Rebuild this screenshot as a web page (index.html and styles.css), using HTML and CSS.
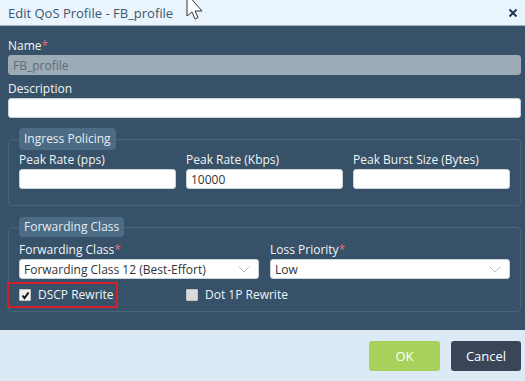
FILE: index.html
```html
<!DOCTYPE html>
<html lang="en">
<head>
  <meta charset="UTF-8">
  <meta name="viewport" content="width=device-width, initial-scale=1.0">
  <title>Edit QoS Profile</title>
  <link rel="stylesheet" href="styles.css">
</head>
<body>
  <div class="dialog">
    <div class="header">
      <span class="title">Edit QoS Profile - FB_profile</span>
      <svg class="close" width="10" height="10" viewBox="0 0 10 10">
        <path d="M1.5 1.5 L8.5 8.5 M8.5 1.5 L1.5 8.5" stroke="#1f3b54" stroke-width="2"/>
      </svg>
      <svg class="cursor" width="20" height="22" viewBox="0 0 20 22">
        <path d="M1 -6 L1 16 L6 12 L9 19 L12 17.5 L9 11 L16 11 Z" fill="#fff" stroke="#333" stroke-width="1" stroke-linejoin="round"/>
      </svg>
    </div>

    <div class="body">
      <label class="field-label">Name<span class="req">*</span></label>
      <input class="text-input disabled" type="text" value="FB_profile" disabled>

      <label class="field-label">Description</label>
      <input class="text-input" type="text">

      <fieldset class="group">
        <legend>Ingress Policing</legend>
        <div class="cols-3">
          <div>
            <label class="field-label">Peak Rate (pps)</label>
            <input class="text-input" type="text">
          </div>
          <div>
            <label class="field-label">Peak Rate (Kbps)</label>
            <input class="text-input" type="text" value="10000">
          </div>
          <div>
            <label class="field-label">Peak Burst Size (Bytes)</label>
            <input class="text-input" type="text">
          </div>
        </div>
      </fieldset>

      <fieldset class="group group-fc">
        <legend>Forwarding Class</legend>
        <div class="cols-2">
          <div>
            <label class="field-label">Forwarding Class<span class="req">*</span></label>
            <div class="select">
              <span>Forwarding Class 12 (Best-Effort)</span>
              <svg width="12" height="7" viewBox="0 0 12 7"><path d="M0.5 0.5 L6 6 L11.5 0.5" fill="none" stroke="#b9bfc5" stroke-width="1"/></svg>
            </div>
          </div>
          <div>
            <label class="field-label">Loss Priority<span class="req">*</span></label>
            <div class="select">
              <span>Low</span>
              <svg width="12" height="7" viewBox="0 0 12 7"><path d="M0.5 0.5 L6 6 L11.5 0.5" fill="none" stroke="#b9bfc5" stroke-width="1"/></svg>
            </div>
          </div>
        </div>
        <div class="cols-3 checks">
          <div class="check">
            <span class="box checked">
              <svg width="9" height="9" viewBox="0 0 9 9"><path d="M1.5 4.5 L3.5 7 L7.5 1.5" fill="none" stroke="#111" stroke-width="2"/></svg>
            </span>
            DSCP Rewrite
            <span class="highlight"></span>
          </div>
          <div class="check">
            <span class="box"></span>
            Dot 1P Rewrite
          </div>
        </div>
      </fieldset>
    </div>

    <div class="footer">
      <button class="btn btn-ok">OK</button>
      <button class="btn btn-cancel">Cancel</button>
    </div>
  </div>
</body>
</html>
```

FILE: styles.css
```css
body {
  margin: 0;
  font-family: "Open Sans", "Noto Sans", sans-serif;
  background-color: #dbeaf5;
}
.dialog {
  width: 525px;
  height: 381px;
  display: flex;
  flex-direction: column;
}
.header {
  position: relative;
  height: 25px;
  background-color: #e9f4fc;
  border-bottom: 1px solid #9fb4c4;
  display: flex;
  align-items: center;
  justify-content: space-between;
  padding: 0 7px 0 8px;
}
.title {
  font-size: 13px;
  color: #3b5770;
}
.close {
  display: block;
}
.cursor {
  position: absolute;
  left: 186px;
  top: 0;
}
.body {
  background-color: #365168;
  padding: 12px 4px 0 8px;
  height: 304px;
  box-sizing: border-box;
}
.field-label {
  display: block;
  font-size: 12px;
  line-height: 16px;
  color: #f1f5f8;
  margin-bottom: 1px;
}
.req {
  color: #e0707c;
}
.text-input {
  display: block;
  box-sizing: border-box;
  width: 100%;
  height: 20px;
  margin: 0 0 6px;
  padding: 0 4px;
  border: 1px solid #c9d3da;
  border-radius: 3px;
  background-color: #fff;
  font-family: inherit;
  font-size: 12px;
  color: #333;
  outline: none;
}
.text-input.disabled {
  background-color: #9dabb6;
  border-color: #9dabb6;
  color: #5d6d7a;
}
.group {
  margin: 10px 0 0;
  padding: 0 10px 16px;
  border: 1px solid #4a6479;
  border-radius: 4px;
}
.group legend {
  background-color: #4c6b84;
  color: #e6edf2;
  font-size: 12px;
  line-height: 22px;
  padding: 0 5px;
  border-radius: 4px;
}
.group .field-label:first-child {
  margin-top: 2px;
}
.group .text-input {
  margin-bottom: 0;
}
.group-fc {
  margin-top: 11px;
  padding-bottom: 7px;
}
.group-fc legend {
  line-height: 20px;
}
.group-fc .field-label:first-child {
  margin-top: 5px;
}
.cols-3 {
  display: grid;
  grid-template-columns: 1fr 1fr 1fr;
  gap: 10px;
}
.cols-2 {
  display: grid;
  grid-template-columns: 1fr 1fr;
  gap: 11px;
}
.select {
  box-sizing: border-box;
  height: 20px;
  background-color: #fff;
  border: 1px solid #c9d3da;
  border-radius: 3px;
  display: flex;
  align-items: center;
  justify-content: space-between;
  padding: 0 8px 0 4px;
  font-size: 12px;
  color: #333;
}
.checks {
  margin-top: 7px;
}
.check {
  position: relative;
  display: flex;
  align-items: center;
  gap: 7px;
  font-size: 12px;
  line-height: 16px;
  color: #f1f5f8;
  height: 18px;
}
.box {
  width: 10px;
  height: 10px;
  background-color: #d9d9d9;
  border: 1px solid #c4c4c4;
  border-radius: 1px;
  display: flex;
  align-items: center;
  justify-content: center;
}
.box.checked {
  background-color: #eeeeee;
}
.highlight {
  position: absolute;
  left: -12px;
  top: -4px;
  width: 107px;
  height: 22px;
  border: 2px solid #d1202e;
}
.footer {
  flex: 1;
  display: flex;
  justify-content: flex-end;
  align-items: flex-start;
  gap: 11px;
  padding: 11px 4px 0 8px;
}
.btn {
  height: 30px;
  border: none;
  border-radius: 3px;
  font-family: inherit;
  font-size: 13px;
  color: #fff;
}
.btn-ok {
  width: 71px;
  background-color: #a7d15b;
}
.btn-cancel {
  width: 70px;
  background-color: #3a4657;
}
```
